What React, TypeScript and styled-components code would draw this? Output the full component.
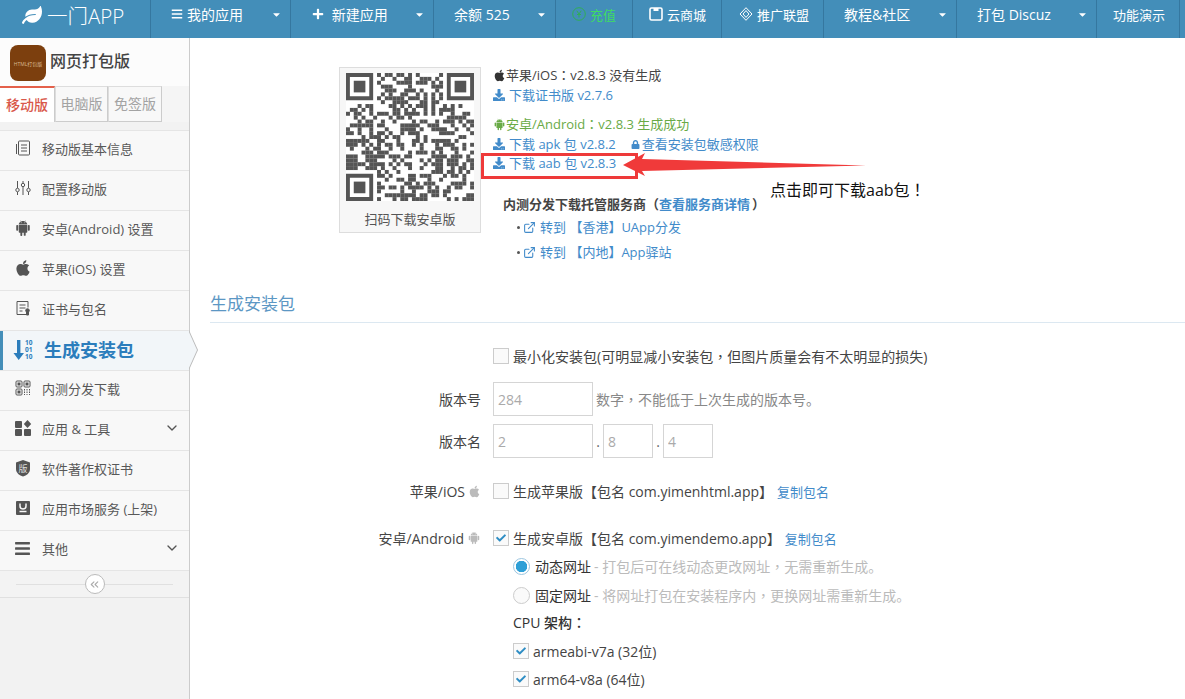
import React from 'react';
import styled, { createGlobalStyle } from 'styled-components';
import { FaApple, FaBars, FaCaretDown, FaCheck, FaDownload, FaLeaf, FaLock, FaPlus } from 'react-icons/fa';
import { AiFillAndroid } from 'react-icons/ai';
import { ChevronDown, ChevronsLeft, ExternalLink } from 'lucide-react';

const Global = createGlobalStyle`
  html, body { margin: 0; padding: 0; background: #fff; }
  body { font-family: "Open Sans", "Noto Sans CJK SC", sans-serif; font-size: 13px; color: #444; }
  #root { height: 100vh; overflow: hidden; }
  * { box-sizing: border-box; }
`;

const Page = styled.div`display: flex; flex-direction: column; height: 699px; overflow: hidden;`;

const Nav = styled.nav`display: flex; height: 38px; flex: none; background: #438eb9; color: #fff;`;
const Brand = styled.div`
  width: 151px; display: flex; align-items: center; gap: 5px; padding: 0 0 8px 22px;
  font-size: 20.5px; font-weight: 300; border-right: 1px solid #35779f;
`;
const NavItem = styled.div<{ $w: number; $pl?: number; $green?: boolean; $sm?: boolean }>`
  width: ${p => p.$w}px; display: flex; align-items: center; padding: 0 8px 10px ${p => p.$pl ?? 20}px; gap: 4px;
  font-size: ${p => (p.$sm ? 13 : 14)}px; white-space: nowrap; border-right: 1px solid #35779f;
  color: ${p => (p.$green ? '#3fdc62' : '#fff')};
`;
const NavCaret = styled(FaCaretDown)`margin-left: auto; font-size: 11px; flex: none;`;

const Body = styled.div`flex: 1; display: flex; min-height: 0;`;
const Side = styled.aside`
  width: 190px; flex: none; background: #f2f2f2; border-right: 1px solid #ccc; display: flex; flex-direction: column;
`;
const SideHead = styled.div`height: 48px; display: flex; padding: 7px 0 0 10px; gap: 4px; background: #fcfcfc;`;
const Logo = styled.div`
  width: 36px; height: 36px; border-radius: 8px; background: #7c3f0e; color: #d9b98f;
  font-size: 5px; display: flex; align-items: center; justify-content: center; white-space: nowrap; overflow: hidden;
`;
const AppName = styled.div`font-size: 16px; font-weight: 500; color: #444; line-height: 32px;`;
const TabBar = styled.div`height: 36px; background: #f5f5f5; display: flex; flex: none;`;
const Tab = styled.div<{ $active?: boolean; $w: number }>`
  width: ${p => p.$w}px; display: flex; align-items: center; justify-content: center; font-size: 14px; padding-bottom: 2px;
  background: ${p => (p.$active ? '#fff' : '#f8f8f8')};
  color: ${p => (p.$active ? '#d9584a' : '#a3a3a3')};
  font-weight: ${p => (p.$active ? 500 : 400)};
  border-left: ${p => (p.$active ? 'none' : '1px solid #ddd')};
  border-top: ${p => (p.$active ? '2px solid #e4604a' : '1px solid #ddd')};
  border-bottom: ${p => (p.$active ? 'none' : '1px solid #ccc')};
  border-right: 1px solid #ccc;
`;
const Menu = styled.ul`list-style: none; margin: 8px 0 0; padding: 0; border-top: 1px solid #e5e5e5;`;
const MenuItem = styled.li<{ $active?: boolean }>`
  position: relative; height: 40px; display: flex; align-items: center; padding-bottom: ${p => (p.$active ? 3 : 5)}px;
  background: ${p => (p.$active ? '#f2f6f9' : '#f8f8f8')};
  border-bottom: 1px solid #e5e5e5;
  color: ${p => (p.$active ? '#2b7dbc' : '#585858')};
  font-size: ${p => (p.$active ? '18px' : '13px')};
  font-weight: ${p => (p.$active ? 700 : 400)};
  ${p => p.$active && `
    box-shadow: inset 3px 0 0 #438eb9;
    &::before, &::after { content: ''; position: absolute; top: -1px; border: solid transparent; border-width: 20px 0 20px 9px; }
    &::before { left: 189px; border-left-color: #bbb; }
    &::after { left: 188px; border-left-color: #f2f6f9; }
  `}
`;
const MenuIcon = styled.span<{ $active?: boolean }>`
  width: ${p => (p.$active ? '44px' : '42px')}; flex: none; padding-left: 3px; display: flex; justify-content: center; color: ${p => (p.$active ? '#2b7dbc' : '#555')};
`;
const MenuArrow = styled(ChevronDown)`margin-left: auto; margin-right: 9px; color: #555;`;
const Toggle = styled.div`
  height: 27px; background: #f3f3f3; border-bottom: 1px solid #e0e0e0; display: flex; align-items: center; padding: 0 16px; 
`;
const ToggleLine = styled.span`flex: 1; height: 1px; background: #e0e0e0;`;
const ToggleBtn = styled.span`
  width: 20px; height: 20px; border-radius: 50%; border: 1px solid #bbb; background: #fff; color: #aaa;
  display: flex; align-items: center; justify-content: center;
`;

const Main = styled.main`flex: 1; position: relative; overflow: hidden; padding-left: 20px;`;
const Top = styled.div`display: flex; gap: 12px; margin-left: 129px; padding-top: 27px;`;
const QrBox = styled.div`
  width: 142px; height: 166px; margin-top: 2px; flex: none; background: #f7f7f7; border: 1px solid #ddd; padding: 5px 6px 0;
  text-align: center; font-size: 13px; color: #555;
`;
const QrCaption = styled.div`margin-top: 9px; line-height: 18px;`;
const QrSvg = styled.svg`display: block; background: #fff;`;
const Info = styled.div`display: flex; flex-direction: column; line-height: 20px; white-space: nowrap;`;
const Line = styled.div<{ $mt?: number; $color?: string; $ml?: number; $bold?: boolean; $gap?: number }>`
  height: 20px; display: flex; align-items: center; gap: ${p => p.$gap ?? 3}px;
  margin-top: ${p => p.$mt ?? 0}px; margin-left: ${p => p.$ml ?? 0}px;
  color: ${p => p.$color ?? '#444'};
  font-weight: ${p => (p.$bold ? 700 : 400)};
`;
const A = styled.span<{ $ml?: number; $mr?: number; $gap?: number }>`
  color: #428bca; margin-left: ${p => p.$ml ?? 0}px; margin-right: ${p => p.$mr ?? 0}px;
  display: inline-flex; align-items: center; gap: ${p => p.$gap ?? 4}px;
`;
const Dot = styled.span`width: 3px; height: 3px; border-radius: 50%; background: #555;`;
const Punct = styled.span`font-family: "Noto Sans CJK TC", sans-serif;`;

const SectionTitle = styled.h3`
  margin: 30px 0 0; height: 31px; line-height: 24px; font-size: 17px; font-weight: 400; color: #5c97c4; border-bottom: 1px solid #dce8f1;
`;
const Form = styled.div`font-size: 14px;`;
const Row = styled.div<{ $mt: number; $h?: number }>`
  display: flex; align-items: center; height: ${p => p.$h ?? 20}px; margin-top: ${p => p.$mt}px; white-space: nowrap;
`;
const Label = styled.label`
  width: 271px; margin-right: 12px; flex: none; display: flex; justify-content: flex-end; align-items: center; gap: 3px; color: #444;
`;
const Indent = styled.div<{ $w: number }>`width: ${p => p.$w}px; flex: none;`;
const Box = styled.span`
  width: 16px; height: 16px; flex: none; border: 1px solid #ccc; background: #fafafa; margin-right: 4px;
  display: inline-flex; align-items: center; justify-content: center; color: #2e8dc4; font-size: 10px;
`;
const Radio = styled.span<{ $on?: boolean }>`
  width: 17px; height: 17px; flex: none; border-radius: 50%; border: 1px solid ${p => (p.$on ? '#9cc6e0' : '#ccc')};
  background: ${p => (p.$on ? 'radial-gradient(circle, #2e9fd6 0 5.5px, #fff 6px)' : '#fafafa')}; margin-right: 5px;
`;
const Field = styled.input<{ $w: number }>`
  width: ${p => p.$w}px; height: 34px; border: 1px solid #d5d5d5; padding: 0 4px; font: inherit; font-size: 14px; outline: none;
  &::placeholder { color: #aaa; }
`;
const Help = styled.span`color: #888; margin-left: 3px;`;
const Sep = styled.span`width: 10px; text-align: center; color: #666;`;
const Muted = styled.span`color: #bbb; margin-left: 3px;`;
const Copy = styled.span`color: #428bca; margin-left: 4px; font-size: 13px;`;
const RadioName = styled.span`color: #333;`;
const Strong = styled.span`font-weight: 500; color: #333;`;

const RedBox = styled.div`position: absolute; left: 291px; top: 115px; width: 157px; height: 26px; border: 3px solid #ee3a3a;`;
const Arrow = styled.svg`position: absolute; left: 433px; top: 114px;`;
const Note = styled.div`position: absolute; left: 580px; top: 139px; font-size: 16px; color: #111; white-space: nowrap;`;

function Qr() {
  const n = 33;
  let s = 20231;
  const rnd = () => { s = (s * 1103515245 + 12345) & 0x7fffffff; return (s >> 16) & 1; };
  const cells: React.ReactNode[] = [];
  const finder = (r: number, c: number) => r >= 0 && c >= 0 && r < 8 && c < 8;
  for (let r = 0; r < n; r++) {
    for (let c = 0; c < n; c++) {
      if (finder(r, c) || finder(r, n - 1 - c) || finder(n - 1 - r, c)) continue;
      const on = rnd() || (r === 6 && c % 2 === 0) || (c === 6 && r % 2 === 0);
      if (on) cells.push(<rect key={r * n + c} x={c} y={r} width={1.02} height={1.02} />);
    }
  }
  const F = ({ x, y }: { x: number; y: number }) => (
    <g>
      <path d={`M${x} ${y}h7v7h-7z M${x + 1} ${y + 1}v5h5v-5z`} fillRule="evenodd" />
      <rect x={x + 2} y={y + 2} width={3} height={3} />
    </g>
  );
  return (
    <QrSvg width={128} height={128} viewBox="0 0 33 33" fill="#555">
      {cells}
      <F x={0} y={0} /><F x={26} y={0} /><F x={0} y={26} />
    </QrSvg>
  );
}

const Ic = ({ size = 18, children }: { size?: number; children: React.ReactNode }) => (
  <svg width={size} height={size} viewBox="0 0 18 18" fill="none" stroke="currentColor" strokeWidth={1}>{children}</svg>
);

const icons = {
  doc: <Ic><rect x="4.5" y="2" width="11" height="14" rx="1" /><path d="M7 6h6M7 9h6M7 12h6M2.5 5v10" /></Ic>,
  sliders: <Ic><path d="M3.5 2v7M3.5 13v3M9 2v2M9 8v8M14.5 2v7M14.5 13v3" /><circle cx="3.5" cy="11" r="1.7" /><circle cx="9" cy="6" r="1.7" /><circle cx="14.5" cy="11" r="1.7" /></Ic>,
  cert: <Ic><path d="M12 15.5H3V2.5h11v6M5.5 6h6M5.5 9h6M5.5 12h3" /><circle cx="13.5" cy="11.5" r="1.8" fill="currentColor" /><path d="M12.5 13h2v3h-2z" fill="currentColor" /></Ic>,
  gen: (
    <svg width="24" height="24" viewBox="0 0 24 24" fill="currentColor">
      <path d="M5 3h3.4v13H12l-5.3 7L1.5 16H5z" />
      <text x="13" y="8" fontSize="6.5" fontWeight="700" fontFamily="Open Sans">10</text>
      <text x="13" y="15" fontSize="6.5" fontWeight="700" fontFamily="Open Sans">01</text>
      <text x="13" y="22" fontSize="6.5" fontWeight="700" fontFamily="Open Sans">10</text>
    </svg>
  ),
  qr: <Ic><rect x="2" y="2" width="6" height="6" rx="1" /><rect x="10" y="2" width="6" height="6" rx="1" /><rect x="2" y="10" width="6" height="6" rx="1" /><rect x="4" y="4" width="2" height="2" fill="currentColor" /><rect x="12" y="4" width="2" height="2" fill="currentColor" /><rect x="4" y="12" width="2" height="2" fill="currentColor" /><path d="M10.5 10v6M13 10v6M15.5 10v6" strokeDasharray="1.5 1" /></Ic>,
  tools: <svg width="18" height="18" viewBox="0 0 18 18" fill="currentColor"><rect x="1" y="2" width="7" height="7" rx="1" /><rect x="1" y="10" width="7" height="7" rx="1" /><rect x="10" y="10" width="7" height="7" rx="1" /><path d="M13.5 1l3.7 4-3.7 4-3.7-4z" /></svg>,
  shield: <svg width="18" height="18" viewBox="0 0 18 18" fill="currentColor"><path d="M9 1l7 2.5v6.5c0 4-3.5 6.5-7 7.5-3.5-1-7-3.5-7-7.5V3.5z" /><text x="9" y="12.5" textAnchor="middle" fontSize="9" fill="#ddd" fontFamily="Noto Sans CJK SC">版</text></svg>,
  market: <svg width="18" height="18" viewBox="0 0 18 18"><rect x="2" y="2" width="14" height="14" rx="1" fill="currentColor" /><path d="M6 4.5v2.5a3 3 0 0 0 6 0V4.5M5.5 12.5h7" stroke="#f8f8f8" strokeWidth="1.5" fill="none" /></svg>,
};

const menu: { t: string; i: React.ReactNode; chev?: boolean; active?: boolean }[] = [
  { t: '移动版基本信息', i: icons.doc },
  { t: '配置移动版', i: icons.sliders },
  { t: '安卓(Android) 设置', i: <AiFillAndroid size={18} /> },
  { t: '苹果(iOS) 设置', i: <FaApple size={18} /> },
  { t: '证书与包名', i: icons.cert },
  { t: '生成安装包', i: icons.gen, active: true },
  { t: '内测分发下载', i: icons.qr },
  { t: '应用 & 工具', i: icons.tools, chev: true },
  { t: '软件著作权证书', i: icons.shield },
  { t: '应用市场服务 (上架)', i: icons.market },
  { t: '其他', i: <FaBars size={17} />, chev: true },
];

export default function App() {
  return (
    <Page>
      <Global />
      <Nav>
        <Brand><FaLeaf size={20} />一门APP</Brand>
        <NavItem $w={140}><FaBars size={12} />我的应用<NavCaret /></NavItem>
        <NavItem $w={143} $pl={21}><FaPlus size={12} />&nbsp;新建应用<NavCaret /></NavItem>
        <NavItem $w={122}>余额 525<NavCaret /></NavItem>
        <NavItem $w={77} $green $pl={16} $sm>
          <svg width="14" height="14" viewBox="0 0 14 14" fill="none" stroke="#2fae55" strokeWidth="1"><circle cx="7" cy="7" r="6.3" /><path d="M4.8 3.8L7 7l2.2-3.2M7 7v3.5M5 7.5h4" /></svg>
          充值
        </NavItem>
        <NavItem $w={89} $pl={16} $sm>
          <svg width="14" height="14" viewBox="0 0 14 14" fill="none" stroke="#fff" strokeWidth="1.6"><rect x="1" y="1" width="12" height="12" rx="1.5" /><rect x="4.5" y="1" width="5" height="3" fill="#fff" stroke="none" /></svg>
          云商城
        </NavItem>
        <NavItem $w={102} $pl={17} $sm>
          <svg width="14" height="14" viewBox="0 0 14 14" fill="none" stroke="#fff" strokeWidth="1"><path d="M7 .7L13 7l-6 6.3L1 7z" /><path d="M7 3.6L10 7l-3 3.4L4 7z" /></svg>
          推广联盟
        </NavItem>
        <NavItem $w={133}>教程&amp;社区<NavCaret /></NavItem>
        <NavItem $w={140}>打包 Discuz<NavCaret /></NavItem>
        <NavItem $w={83} $pl={16} $sm>功能演示</NavItem>
      </Nav>
      <Body>
        <Side>
          <SideHead>
            <Logo>HTML打包版</Logo>
            <AppName>网页打包版</AppName>
          </SideHead>
          <TabBar>
            <Tab $active $w={55}>移动版</Tab>
            <Tab $w={53}>电脑版</Tab>
            <Tab $w={54}>免签版</Tab>
          </TabBar>
          <Menu>
            {menu.map(m => (
              <MenuItem key={m.t} $active={m.active}>
                <MenuIcon $active={m.active}>{m.i}</MenuIcon>
                {m.t}
                {m.chev && <MenuArrow size={16} />}
              </MenuItem>
            ))}
          </Menu>
          <Toggle>
            <ToggleLine />
            <ToggleBtn><ChevronsLeft size={13} /></ToggleBtn>
            <ToggleLine />
          </Toggle>
        </Side>
        <Main>
          <Top>
            <QrBox>
              <Qr />
              <QrCaption>扫码下载安卓版</QrCaption>
            </QrBox>
            <Info>
              <Line $gap={0}><FaApple size={13} color="#333" /><span>苹果/iOS<Punct>：</Punct>v2.8.3 没有生成</span></Line>
              <Line><A><FaDownload size={12} />下载证书版 v2.7.6</A></Line>
              <Line $mt={9} $color="#69aa46" $gap={0}><AiFillAndroid size={13} /><span>安卓/Android<Punct>：</Punct>v2.8.3 生成成功</span></Line>
              <Line><A><FaDownload size={12} />下载 apk 包 v2.8.2</A><A $ml={12} $gap={2}><FaLock size={9} />查看安装包敏感权限</A></Line>
              <Line $mt={-1}><A><FaDownload size={12} />下载 aab 包 v2.8.3</A></Line>
              <Line $mt={21} $ml={10} $bold $gap={0}>内测分发下载托管服务商（<A $mr={2}>查看服务商详情</A>）</Line>
              <Line $mt={3} $ml={24}><Dot /><A><ExternalLink size={13} />转到 【香港】UApp分发</A></Line>
              <Line $mt={5} $ml={24}><Dot /><A><ExternalLink size={13} />转到 【内地】App驿站</A></Line>
            </Info>
          </Top>
          <SectionTitle>生成安装包</SectionTitle>
          <Form>
            <Row $mt={25} $h={16}><Indent $w={283} /><Box /><span>最小化安装包(可明显减小安装包<Punct>，</Punct>但图片质量会有不太明显的损失)</span></Row>
            <Row $mt={18} $h={34}><Label>版本号</Label><Field $w={100} placeholder="284" /><Help>数字<Punct>，</Punct>不能低于上次生成的版本号。</Help></Row>
            <Row $mt={8} $h={34}><Label>版本名</Label><Field $w={100} placeholder="2" /><Sep>.</Sep><Field $w={50} placeholder="8" /><Sep>.</Sep><Field $w={50} placeholder="4" /></Row>
            <Row $mt={23}><Label>苹果/iOS<FaApple size={13} color="#bbb" /></Label><Box />生成苹果版【包名 com.yimenhtml.app】<Copy>复制包名</Copy></Row>
            <Row $mt={27}><Label>安卓/Android<AiFillAndroid size={14} color="#bbb" /></Label><Box><FaCheck /></Box>生成安卓版【包名 com.yimendemo.app】<Copy>复制包名</Copy></Row>
            <Row $mt={8}><Indent $w={303} /><Radio $on /><RadioName>动态网址</RadioName><Muted>- 打包后可在线动态更改网址<Punct>，</Punct>无需重新生成。</Muted></Row>
            <Row $mt={9}><Indent $w={303} /><Radio /><RadioName>固定网址</RadioName><Muted>- 将网址打包在安装程序内<Punct>，</Punct>更换网址需重新生成。</Muted></Row>
            <Row $mt={7}><Indent $w={303} /><Strong>CPU 架构<Punct>：</Punct></Strong></Row>
            <Row $mt={9}><Indent $w={303} /><Box><FaCheck /></Box>armeabi-v7a (32位)</Row>
            <Row $mt={8}><Indent $w={303} /><Box><FaCheck /></Box>arm64-v8a (64位)</Row>
          </Form>
          <RedBox />
          <Arrow width="244" height="24" viewBox="0 0 244 24">
            <path d="M0 13L22 1 19 7 243 13.5 19 19 22 24z" fill="#f03a3a" />
          </Arrow>
          <Note>点击即可下载aab包<Punct>！</Punct></Note>
        </Main>
      </Body>
    </Page>
  );
}
